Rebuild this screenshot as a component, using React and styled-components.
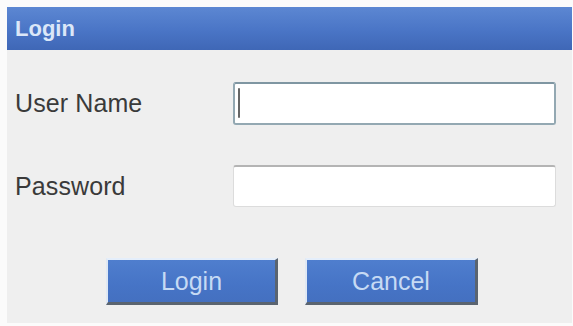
import React from 'react';
import styled, { createGlobalStyle } from 'styled-components';

const GlobalStyle = createGlobalStyle`
    body {
        margin: 0;
        background: #fbfbfb;
        font-family: "Liberation Sans", Arial, sans-serif;
    }
`;

const Panel = styled.div`
    margin: 7px 1px 0 7px;
    height: 316px;
    background: #efefef;
    display: flex;
    flex-direction: column;
`;

const Header = styled.div`
    height: 43px;
    display: flex;
    align-items: center;
    padding-left: 8px;
    background: linear-gradient(#5c87d2, #4a75c6 55%, #3f67b6);
    color: #dbe7f8;
    font-weight: bold;
    font-size: 22px;
`;

const Form = styled.div`
    display: grid;
    grid-template-columns: 218px 323px;
    row-gap: 40px;
    align-items: center;
    padding: 32px 0 0 8px;
`;

const Label = styled.label`
    font-size: 25px;
    color: #3a3a3a;
    letter-spacing: 0.1px;
`;

const Field = styled.div`
    height: ${(p) => (p.focused ? 43 : 42)}px;
    box-sizing: border-box;
    background: #fff;
    border-radius: 3px;
    border: ${(p) => (p.focused ? '2px solid #93a8b2' : '1px solid #dcdcdc')};
    border-top: ${(p) => (p.focused ? '2px solid #7f96a2' : '2px solid #b4b4b4')};
    position: relative;
`;

const Caret = styled.span`
    position: absolute;
    left: 3px;
    top: 4px;
    width: 2px;
    height: 30px;
    border-radius: 1px;
    background: #666;
`;

const Buttons = styled.div`
    display: flex;
    justify-content: center;
    gap: 27px;
    padding-left: 5px;
    margin-top: 51px;
`;

const Button = styled.button`
    width: ${(p) => p.w}px;
    height: 47px;
    box-sizing: border-box;
    font-family: "Liberation Sans", Arial, sans-serif;
    font-size: 25px;
    color: #c6daf4;
    background: linear-gradient(#4f7ece, #4674c6 60%, #4470c0);
    border: none;
    border-top: 2px solid #e4eefb;
    border-left: 2px solid #dfe8f4;
    border-right: 3px solid #5a6470;
    border-bottom: 3px solid #5a6470;
    padding: 0;
`;

export default function App() {
    return (
        <>
            <GlobalStyle />
            <Panel>
                <Header>Login</Header>
                <Form>
                    <Label>User Name</Label>
                    <Field focused>
                        <Caret />
                    </Field>
                    <Label>Password</Label>
                    <Field />
                </Form>
                <Buttons>
                    <Button w={172}>Login</Button>
                    <Button w={173}>Cancel</Button>
                </Buttons>
            </Panel>
        </>
    );
}
